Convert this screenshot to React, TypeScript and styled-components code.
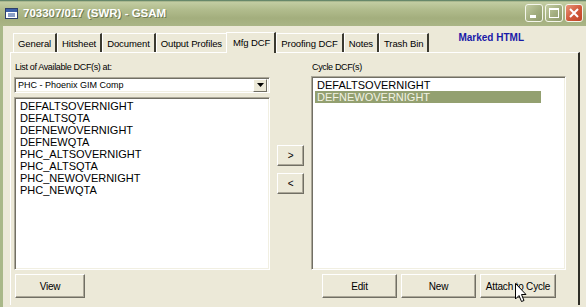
import React from "react";
import styled, { createGlobalStyle } from "styled-components";

const GlobalStyle = createGlobalStyle`
  html, body { margin: 0; padding: 0; background: #ece9d8; }
  body { width: 586px; height: 307px; overflow: hidden; }
`;

const UI_FONT = `"Liberation Sans", Arial, sans-serif`;

const Window = styled.div`
  width: 586px;
  height: 307px;
  display: flex;
  flex-direction: column;
  overflow: hidden;
  font-family: ${UI_FONT};
  font-size: 9.5px;
  color: #000;
`;

const TitleBar = styled.div`
  height: 26px;
  flex: none;
  display: flex;
  align-items: center;
  padding: 0 3px 0 5px;
  box-sizing: border-box;
  background: linear-gradient(
    #3f6d5a 0px,
    #8fa27a 1px,
    #c3cda3 2px,
    #b2bd8e 35%,
    #a3ae7d 70%,
    #aab586 100%
  );
`;

const Title = styled.span`
  margin-left: 5px;
  flex: 1;
  color: #fff;
  font-weight: bold;
  font-size: 11.5px;
  text-shadow: 1px 1px 0 #6f7a52;
`;

const Controls = styled.div`
  display: flex;
  gap: 2px;
`;

const CtrlButton = styled.div<{ $close?: boolean }>`
  width: 18px;
  height: 18px;
  border: 1px solid #f4f6ec;
  border-radius: 3px;
  box-sizing: border-box;
  display: flex;
  align-items: center;
  justify-content: center;
  background: ${(p) =>
    p.$close
      ? "linear-gradient(135deg, #e9957a, #d0583a 55%, #c04426)"
      : "linear-gradient(135deg, #c3cca3, #a2ad7f 55%, #8f9a6c)"};
`;

const Body = styled.div`
  flex: 1;
  display: flex;
  flex-direction: column;
  background: #ece9d8;
  border-left: 3px solid #a9b888;
  padding: 5px 6px 0 7px;
`;

const TabStrip = styled.div`
  display: flex;
  align-items: flex-end;
  height: 21px;
  position: relative;
  z-index: 1;
  margin-left: 3px;
`;

const Tab = styled.div<{ $active?: boolean }>`
  height: ${(p) => (p.$active ? 21 : 19)}px;
  box-sizing: border-box;
  padding: 0 4px 0 ${(p) => (p.$active ? 6 : 4)}px;
  display: flex;
  align-items: center;
  white-space: nowrap;
  letter-spacing: -0.1px;
  background: #ece9d8;
  border-top: 1px solid #fff;
  border-left: 1px solid #fff;
  border-right: 2px solid #3a392f;
  margin-bottom: ${(p) => (p.$active ? -1 : 0)}px;
  margin-left: ${(p) => (p.$active ? -2 : 0)}px;
  padding-bottom: ${(p) => (p.$active ? 2 : 0)}px;
`;

const BlankTab = styled(Tab)`
  border-right-color: transparent;
`;

const Marker = styled.span`
  margin-left: 29px;
  align-self: flex-start;
  margin-top: 1px;
  white-space: nowrap;
  color: #1a1aa8;
  font-weight: bold;
  font-size: 10px;
`;

const Panel = styled.div`
  width: 570px;
  height: 253px;
  box-sizing: border-box;
  border-top: 1px solid #fff;
  border-left: 1px solid #fff;
  border-right: 2px solid #2e2d26;
  padding: 8px 0 0 3px;
  display: flex;
  flex-direction: column;
`;

const Columns = styled.div`
  display: grid;
  grid-template-columns: 256px 41px 255px;
  height: 209px;
`;

const Column = styled.div`
  display: flex;
  flex-direction: column;
  min-height: 0;
`;

const Label = styled.div<{ $gap: number }>`
  height: 12px;
  line-height: 12px;
  font-size: 9px;
  letter-spacing: -0.35px;
  margin-bottom: ${(p) => p.$gap}px;
  padding-left: 1px;
`;

const sunken = `
  background: #fff;
  box-sizing: border-box;
  border-top: 1px solid #aca899;
  border-left: 1px solid #aca899;
  border-right: 1px solid #fff;
  border-bottom: 1px solid #fff;
  box-shadow: inset 1px 1px 0 #716f64, inset -1px -1px 0 #f1efe2;
`;

const Combo = styled.div`
  ${sunken}
  height: 16px;
  margin-bottom: 4px;
  display: flex;
  align-items: center;
  padding: 0 2px 0 3px;
`;

const ComboText = styled.span`
  flex: 1;
  font-size: 9px;
`;

const ComboArrow = styled.div`
  width: 14px;
  height: 13px;
  box-sizing: border-box;
  background: #ece9d8;
  border-top: 1px solid #fff;
  border-left: 1px solid #fff;
  border-right: 1px solid #716f64;
  border-bottom: 1px solid #716f64;
  display: flex;
  align-items: center;
  justify-content: center;
`;

const ListBox = styled.div`
  ${sunken}
  flex: 1;
  padding: 2px 3px;
`;

const ListItem = styled.div<{ $selected?: boolean }>`
  height: 12px;
  line-height: 12px;
  width: 224px;
  padding-left: 2px;
  font-size: 11px;
  background: ${(p) => (p.$selected ? "#93a070" : "transparent")};
  color: ${(p) => (p.$selected ? "#f2f2e4" : "#000")};
`;

const MoveButtons = styled.div`
  display: flex;
  flex-direction: column;
  gap: 7px;
  padding: 84px 0 0 7px;
`;

const Button = styled.button<{ $w: number; $h?: number }>`
  width: ${(p) => p.$w}px;
  height: ${(p) => p.$h ?? 24}px;
  padding: 0;
  background: #ece9d8;
  font-family: ${UI_FONT};
  font-size: 10px;
  letter-spacing: -0.2px;
  color: #000;
  border-top: 1px solid #fff;
  border-left: 1px solid #fff;
  border-right: 1px solid #716f64;
  border-bottom: 1px solid #716f64;
  box-shadow: inset -1px -1px 0 #aca899;
  cursor: default;
`;

const ButtonRow = styled.div`
  display: flex;
  align-items: center;
  margin-top: 4px;
  padding-left: 1px;
  gap: 4px;
`;

const Spacer = styled.div`
  width: 229px;
`;

const Cursor = styled.svg`
  position: absolute;
  left: 515px;
  top: 283px;
`;

const leftItems = [
  "DEFALTSOVERNIGHT",
  "DEFALTSQTA",
  "DEFNEWOVERNIGHT",
  "DEFNEWQTA",
  "PHC_ALTSOVERNIGHT",
  "PHC_ALTSQTA",
  "PHC_NEWOVERNIGHT",
  "PHC_NEWQTA",
];

const rightItems = ["DEFALTSOVERNIGHT", "DEFNEWOVERNIGHT"];

const tabs = [
  "General",
  "Hitsheet",
  "Document",
  "Output Profiles",
  "Mfg DCF",
  "Proofing DCF",
  "Notes",
  "Trash Bin",
];

export default function App() {
  return (
    <Window>
      <GlobalStyle />
      <TitleBar>
        <svg width="13" height="11" viewBox="0 0 13 11">
          <rect x="0.5" y="0.5" width="12" height="10" fill="#fff" stroke="#2d3f6a" />
          <rect x="1" y="1" width="11" height="3" fill="#3b5fa8" />
          <rect x="3" y="5" width="7" height="4" fill="#8ba0c8" />
        </svg>
        <Title>703307/017 (SWR) - GSAM</Title>
        <Controls>
          <CtrlButton>
            <svg width="16" height="16" viewBox="0 0 16 16">
              <rect x="4" y="10" width="6" height="3" fill="#fff" />
            </svg>
          </CtrlButton>
          <CtrlButton>
            <svg width="16" height="16" viewBox="0 0 16 16">
              <rect x="3.5" y="3.5" width="9" height="9" fill="none" stroke="#fff" />
              <rect x="3" y="3" width="10" height="2" fill="#fff" />
            </svg>
          </CtrlButton>
          <CtrlButton $close>
            <svg width="16" height="16" viewBox="0 0 16 16">
              <path d="M4 4 L12 12 M12 4 L4 12" stroke="#fff" strokeWidth="2" />
            </svg>
          </CtrlButton>
        </Controls>
      </TitleBar>
      <Body>
        <TabStrip>
          {tabs.map((t) =>
            t === "Output Profiles" ? (
              <BlankTab key={t}>{t}</BlankTab>
            ) : (
              <Tab key={t} $active={t === "Mfg DCF"}>
                {t}
              </Tab>
            )
          )}
          <Marker>Marked HTML</Marker>
        </TabStrip>
        <Panel>
          <Columns>
            <Column>
              <Label $gap={4}>List of Available DCF(s) at:</Label>
              <Combo>
                <ComboText>PHC - Phoenix GIM Comp</ComboText>
                <ComboArrow>
                  <svg width="7" height="4" viewBox="0 0 7 4">
                    <path d="M0 0 H7 L3.5 4 Z" fill="#000" />
                  </svg>
                </ComboArrow>
              </Combo>
              <ListBox>
                {leftItems.map((i) => (
                  <ListItem key={i}>{i}</ListItem>
                ))}
              </ListBox>
            </Column>
            <MoveButtons>
              <Button $w={27} $h={21}>&gt;</Button>
              <Button $w={27} $h={21}>&lt;</Button>
            </MoveButtons>
            <Column>
              <Label $gap={3}>Cycle DCF(s)</Label>
              <ListBox>
                {rightItems.map((i) => (
                  <ListItem key={i} $selected={i === "DEFNEWOVERNIGHT"}>
                    {i}
                  </ListItem>
                ))}
              </ListBox>
            </Column>
          </Columns>
          <ButtonRow>
            <Button $w={70}>View</Button>
            <Spacer />
            <Button $w={75}>Edit</Button>
            <Button $w={75}>New</Button>
            <Button $w={76}>Attach to Cycle</Button>
          </ButtonRow>
        </Panel>
      </Body>
      <Cursor width="12" height="20" viewBox="0 0 12 20">
        <path
          d="M0.5 0.5 V16 L4 12.5 L6.5 18.5 L9 17.5 L6.5 11.5 L11 11.5 Z"
          fill="#fff"
          stroke="#000"
          strokeWidth="1"
        />
      </Cursor>
    </Window>
  );
}
